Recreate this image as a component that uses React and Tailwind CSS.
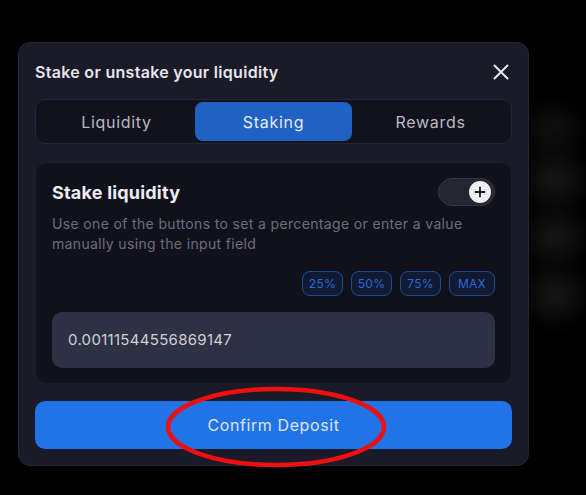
import React from "react";

export default function App() {
  const font = { fontFamily: "Inter, 'Noto Sans', sans-serif" };
  return (
    <div className="relative w-[586px] h-[495px] bg-black overflow-hidden" style={font}>
      {/* faint background blobs */}
      <div className="absolute left-[528px] top-[110px] w-[50px] h-[40px] rounded-full bg-[#1a1a1a] blur-md opacity-60"></div>
      <div className="absolute left-[530px] top-[160px] w-[50px] h-[40px] rounded-full bg-[#222] blur-md opacity-70"></div>
      <div className="absolute left-[530px] top-[217px] w-[50px] h-[40px] rounded-full bg-[#222] blur-md opacity-70"></div>
      <div className="absolute left-[530px] top-[275px] w-[50px] h-[40px] rounded-full bg-[#222] blur-md opacity-70"></div>

      <div className="absolute left-[18px] top-[42px] w-[511px] h-[424px] rounded-[12px] bg-[#1a1a28] border border-[#242433] px-[16px] pt-[14px] flex flex-col">
        <div className="flex items-center justify-between h-[30px]">
          <span className="text-[16px] font-semibold text-[#e6e6ec] tracking-[0.3px]">Stake or unstake your liquidity</span>
          <svg width="18" height="18" viewBox="0 0 18 18" className="mr-[2px]">
            <path d="M2.5 2.5 L15.5 15.5 M15.5 2.5 L2.5 15.5" stroke="#e8e8ee" strokeWidth="2" strokeLinecap="round" />
          </svg>
        </div>

        <div className="mt-[12px] h-[45px] rounded-[10px] bg-[#12121c] border border-[#25253a] p-[2px] grid grid-cols-3">
          <div className="flex items-center justify-center text-[16px] text-[#b9b9c4] tracking-[0.7px]">Liquidity</div>
          <div className="flex items-center justify-center text-[16px] text-[#e6ecf8] bg-[#2061c4] rounded-[8px] tracking-[0.7px]">Staking</div>
          <div className="flex items-center justify-center text-[16px] text-[#b9b9c4] tracking-[0.7px]">Rewards</div>
        </div>

        <div className="mt-[18px] rounded-[12px] bg-[#11111c] border border-[#1c1c2a] px-[16px] pt-[15px] pb-[15px] flex flex-col">
          <div className="flex items-center justify-between h-[28px]">
            <span className="text-[18px] font-bold text-[#ececf2] tracking-[0.2px]">Stake liquidity</span>
            <div className="w-[57px] h-[28px] rounded-full bg-[#252532] border border-[#35354a] flex items-center justify-end pr-[3px]">
              <div className="w-[22px] h-[22px] rounded-full bg-[#efeff2] flex items-center justify-center">
                <svg width="12" height="12" viewBox="0 0 12 12">
                  <path d="M6 1.5 V10.5 M1.5 6 H10.5" stroke="#1a1a24" strokeWidth="1.8" strokeLinecap="round" />
                </svg>
              </div>
            </div>
          </div>
          <p className="mt-[8px] max-w-[425px] text-[14px] leading-[20px] text-[#6e6e7c] tracking-[0.35px]">
            Use one of the buttons to set a percentage or enter a value manually using the input field
          </p>
          <div className="mt-[17px] flex justify-end gap-[8px]">
            {["25%", "50%", "75%", "MAX"].map((t) => (
              <div
                key={t}
                className={`h-[25px] ${t === "MAX" ? "w-[46px]" : "w-[41px]"} rounded-[8px] border border-[#1f4a8f] bg-[#111a33] text-[12px] text-[#2a6ad8] tracking-[0.3px] flex items-center justify-center`}
              >
                {t}
              </div>
            ))}
          </div>
          <div className="mt-[16px] h-[56px] rounded-[10px] bg-[#2e3144] flex items-center px-[16px] text-[15px] text-[#cfd0d8] tracking-[0.3px]">
            0.0011154455686914​7
          </div>
        </div>

        <div className="mt-[17px] h-[48px] rounded-[10px] bg-[#2173e6] flex items-center justify-center text-[16px] text-[#dce6f6] tracking-[0.6px]">
          Confirm Deposit
        </div>
      </div>

      {/* red annotation ellipse */}
      <svg className="absolute left-[160px] top-[382px]" width="234" height="90" viewBox="0 0 234 90">
        <ellipse cx="116" cy="45" rx="108" ry="38" fill="none" stroke="#ee1010" strokeWidth="4.5" />
      </svg>
    </div>
  );
}
